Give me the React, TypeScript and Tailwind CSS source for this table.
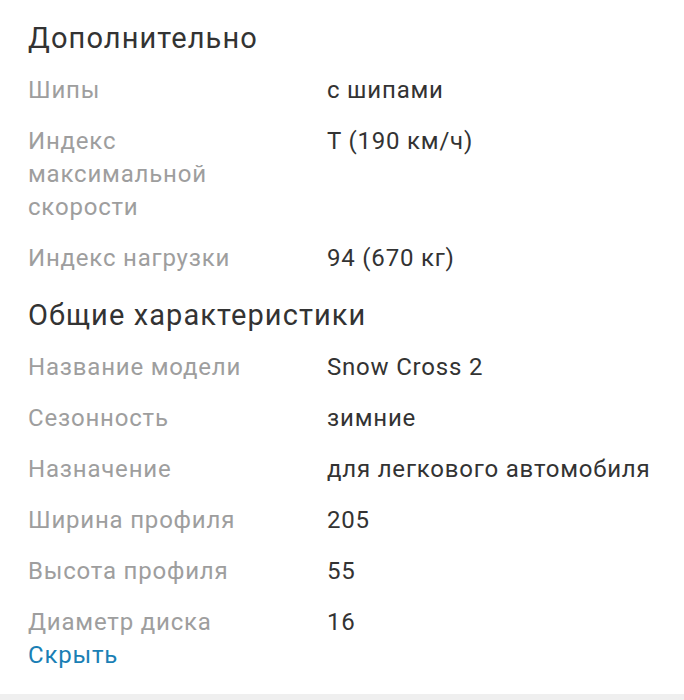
const extra = [
  { label: 'Шипы', value: 'с шипами' },
  { label: 'Индекс максимальной скорости', value: 'T (190 км/ч)' },
  { label: 'Индекс нагрузки', value: '94 (670 кг)' },
];

const general = [
  { label: 'Название модели', value: 'Snow Cross 2' },
  { label: 'Сезонность', value: 'зимние' },
  { label: 'Назначение', value: 'для легкового автомобиля' },
  { label: 'Ширина профиля', value: '205' },
  { label: 'Высота профиля', value: '55' },
  { label: 'Диаметр диска', value: '16' },
];

function Section({ title, rows }: { title: string; rows: { label: string; value: string }[] }) {
  return (
    <div className="flex flex-col gap-[18px]">
      <h2 className="text-[29px] leading-[36px] tracking-[1.1px] text-[#333333]">{title}</h2>
      {rows.map((row) => (
        <div key={row.label} className="grid grid-cols-[299px_1fr] text-[24px] leading-[33px] tracking-[0.8px]">
          <div className="w-[240px] text-[#9e9e9e]">{row.label}</div>
          <div className="whitespace-nowrap text-[#333333]">{row.value}</div>
        </div>
      ))}
    </div>
  );
}

export default function App() {
  return (
    <div className="min-h-[700px] bg-white" style={{ fontFamily: 'Roboto, "Noto Sans", sans-serif' }}>
      <div className="flex flex-col gap-[22px] px-[28px] pt-[20px]">
        <Section title="Дополнительно" rows={extra} />
        <Section title="Общие характеристики" rows={general} />
      </div>
      <div className="px-[28px] pb-[22px]">
        <a href="#" className="text-[24px] leading-[33px] tracking-[0.8px] text-[#1a7fb5]">
          Скрыть
        </a>
      </div>
      <div className="h-[40px] bg-[#efefef]" />
    </div>
  );
}
